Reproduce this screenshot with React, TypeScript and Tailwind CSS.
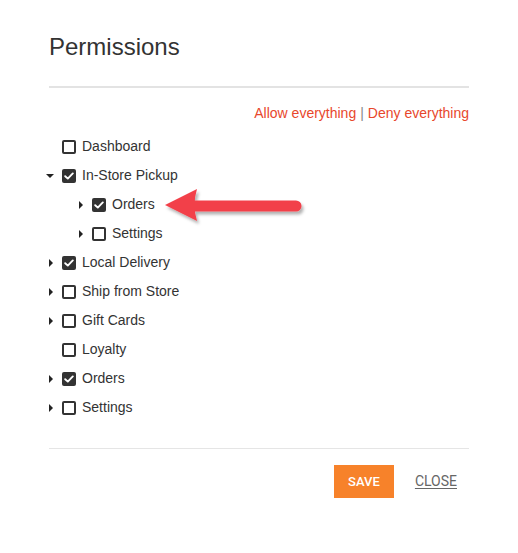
type Node = {
  label: string;
  checked: boolean;
  caret?: "down" | "right";
  level: number;
};

const nodes: Node[] = [
  { label: "Dashboard", checked: false, level: 0 },
  { label: "In-Store Pickup", checked: true, caret: "down", level: 0 },
  { label: "Orders", checked: true, caret: "right", level: 1 },
  { label: "Settings", checked: false, caret: "right", level: 1 },
  { label: "Local Delivery", checked: true, caret: "right", level: 0 },
  { label: "Ship from Store", checked: false, caret: "right", level: 0 },
  { label: "Gift Cards", checked: false, caret: "right", level: 0 },
  { label: "Loyalty", checked: false, level: 0 },
  { label: "Orders", checked: true, caret: "right", level: 0 },
  { label: "Settings", checked: false, caret: "right", level: 0 },
];

const Caret = ({ dir }: { dir?: "down" | "right" }) => (
  <span className="w-[10px] h-[10px] mr-[7px] flex items-center justify-center">
    {dir === "down" && (
      <span className="w-0 h-0 border-l-[4px] border-r-[4px] border-t-[4px] border-l-transparent border-r-transparent border-t-[#222]" />
    )}
    {dir === "right" && (
      <span className="w-0 h-0 border-t-[4px] border-b-[4px] border-l-[4px] border-t-transparent border-b-transparent border-l-[#222] ml-[2px]" />
    )}
  </span>
);

const Checkbox = ({ checked }: { checked: boolean }) =>
  checked ? (
    <span className="w-[14px] h-[14px] mr-[6px] rounded-[2px] bg-[#333] flex items-center justify-center">
      <svg width="10" height="8" viewBox="0 0 10 8">
        <path d="M1.2 4.2 L3.8 6.6 L8.8 1.4" fill="none" stroke="#fff" strokeWidth="1.9" strokeLinecap="round" strokeLinejoin="round" />
      </svg>
    </span>
  ) : (
    <span className="w-[14px] h-[14px] mr-[6px] rounded-[2px] border-2 border-[#333] bg-white" />
  );

const App = () => {
  return (
    <div className="relative w-[518px] h-[553px] bg-white font-['Liberation_Sans',Arial,sans-serif] text-[#333]">
      <div className="pl-[49px] w-[469px]">
        <h1 className="pt-[31px] text-[24px] leading-8 text-[#333]">Permissions</h1>
        <div className="mt-[23px] h-[2px] bg-[#e3e3e3]" />

        {/* allow / deny links */}
        <div className="mt-[15px] flex justify-end text-[14px] leading-5">
          <button className="text-[#e8472c]">Allow everything</button>
          <span className="text-[#888] mx-[4px]">|</span>
          <button className="text-[#e8472c]">Deny everything</button>
        </div>

        {/* permission tree */}
        <div className="mt-[9px] ml-[-4px] flex flex-col">
          {nodes.map((n, i) => (
            <div
              key={i}
              className={`h-[29px] flex items-center text-[14px] ${n.level === 1 ? "pl-[30px]" : ""}`}
            >
              <Caret dir={n.caret} />
              <Checkbox checked={n.checked} />
              <span>{n.label}</span>
            </div>
          ))}
        </div>

        <div className="mt-[26px] h-[1px] bg-[#e5e5e5]" />

        <div className="mt-[16px] flex justify-end items-center gap-[9px] font-['Roboto',sans-serif]">
          <button className="w-[60px] h-[33px] bg-[#f7822a] text-white text-[13px] font-medium">SAVE</button>
          <button className="h-[33px] px-[12px] text-[#666] text-[14px] underline underline-offset-2">CLOSE</button>
        </div>
      </div>

      {/* annotation arrow */}
      <svg className="absolute left-[155px] top-[180px]" width="160" height="50" viewBox="155 180 160 50">
        <defs>
          <filter id="sh" x="-10%" y="-30%" width="130%" height="170%">
            <feDropShadow dx="2" dy="3" stdDeviation="1.5" floodColor="#000" floodOpacity="0.3" />
          </filter>
        </defs>
        <g filter="url(#sh)" fill="#f2404a">
          <path d="M165 205 L197 189 Q192 205 197 221 Z" />
          <path d="M192 200.5 L296 200.5 A5.5 5.5 0 0 1 296 211.5 L192 211.5 Z" />
        </g>
      </svg>
    </div>
  );
};

export default App;
